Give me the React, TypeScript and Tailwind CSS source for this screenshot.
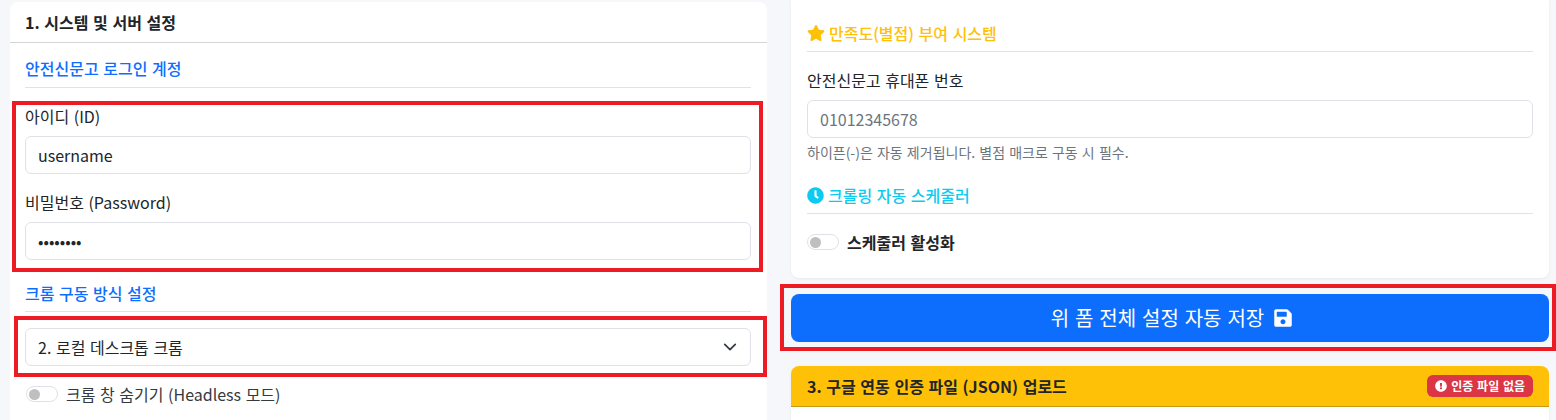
import React from 'react';
import { FaStar, FaClock, FaSave, FaExclamationCircle } from 'react-icons/fa';

const inputClass =
  'block w-full h-[38px] px-3 rounded-md border border-[#dee2e6] bg-white text-base text-[#212529] outline-none placeholder:text-[#6c757d]';

const SubHeading: React.FC<{ className: string; icon?: React.ReactNode; children: React.ReactNode }> = ({
  className,
  icon,
  children,
}) => (
  <div className={`flex items-center gap-[4px] h-[24px] font-medium text-base ${className}`}>
    {icon}
    <span>{children}</span>
  </div>
);

const Toggle: React.FC = () => (
  <span className="flex items-center w-8 h-4 rounded-full border border-[#dee2e6] bg-white pl-[2px]">
    <span className="w-[11px] h-[11px] rounded-full bg-[#bfbfbf]"></span>
  </span>
);

export default function App() {
  return (
    <div
      className="relative h-[420px] overflow-hidden bg-[#f6f7fb] text-[#212529] [word-spacing:1px]"
      style={{ fontFamily: '"Noto Sans CJK KR", "Noto Sans", sans-serif' }}
    >
      <div className="grid grid-cols-[757px_758px] gap-x-[24px] pl-[10px]">
        {/* left column */}
        <div className="mt-[2px] h-[440px] rounded-t-lg bg-white">
          <div className="flex items-center h-[41px] px-[15px] border-b border-[#d3d5d8] font-bold text-base">
            1. 시스템 및 서버 설정
          </div>
          <div className="pl-[15px] pr-[16px]">
            <div className="pt-[13px] pb-[7px] border-b border-[#e0e2e5]">
              <SubHeading className="text-[#0d6efd]">안전신문고 로그인 계정</SubHeading>
            </div>
            <label className="block mt-[16px] mb-[8px] h-[24px] leading-[24px] text-base">아이디 (ID)</label>
            <input className={inputClass} defaultValue="username" readOnly />
            <label className="block mt-[16px] mb-[8px] h-[24px] leading-[24px] text-base">비밀번호 (Password)</label>
            <input className={inputClass} type="password" defaultValue="password" readOnly />
            <div className="mt-[21px] pb-[6px] border-b border-[#e0e2e5]">
              <SubHeading className="text-[#0d6efd]">크롬 구동 방식 설정</SubHeading>
            </div>
            <div className="relative mt-[16px]">
              <select className={`${inputClass} appearance-none [word-spacing:1px]`} defaultValue="local">
                <option value="local">2. 로컬 데스크톱 크롬</option>
              </select>
              <svg
                className="absolute right-[14px] top-[12px] w-[14px] h-[14px]"
                viewBox="0 0 16 16"
                fill="none"
                stroke="#343a40"
                strokeWidth="2"
                strokeLinecap="round"
                strokeLinejoin="round"
              >
                <path d="m2 5 6 6 6-6" />
              </svg>
            </div>
            <div className="flex items-center gap-[8px] mt-[16px] ml-[1px] h-[24px] text-base text-[#343a40]">
              <Toggle />
              <span>크롬 창 숨기기 (Headless 모드)</span>
            </div>
          </div>
        </div>

        {/* right column */}
        <div>
          <div className="h-[278px] rounded-b-lg bg-white shadow-[0_1px_3px_rgba(0,0,0,0.06)] px-[16px] pt-[21px]">
            <div className="pb-[6px] border-b border-[#e0e2e5]">
              <SubHeading className="text-[#ffc107]" icon={<FaStar className="w-[18px] h-[16px]" />}>
                만족도(별점) 부여 시스템
              </SubHeading>
            </div>
            <label className="block mt-[16px] mb-[8px] h-[24px] leading-[24px] text-base">안전신문고 휴대폰 번호</label>
            <input className={inputClass} placeholder="01012345678" readOnly />
            <div className="mt-[4px] h-[20px] leading-[20px] text-sm text-[#6c757d]">
              하이픈(-)은 자동 제거됩니다. 별점 매크로 구동 시 필수.
            </div>
            <div className="mt-[21px] pb-[6px] border-b border-[#e0e2e5]">
              <SubHeading className="text-[#0dcaf0]" icon={<FaClock className="w-[17px] h-[17px]" />}>
                크롤링 자동 스케줄러
              </SubHeading>
            </div>
            <div className="flex items-center gap-[8px] mt-[16px] h-[24px] font-bold text-base">
              <Toggle />
              <span>스케줄러 활성화</span>
            </div>
          </div>

          <button className="flex items-center justify-center gap-[10px] w-full h-[48px] mt-[16px] pl-[3px] rounded-lg bg-[#0d6efd] text-white text-[20px] [word-spacing:1.4px]">
            위 폼 전체 설정 자동 저장
            <FaSave className="w-[18px] h-[20px]" />
          </button>

          <div className="mt-[24px] h-[60px] rounded-t-lg bg-white shadow-[0_1px_3px_rgba(0,0,0,0.06)]">
            <div className="flex items-center justify-between h-[41px] pl-[16px] pr-[16px] rounded-t-lg bg-[#ffc107] border-b border-[#c49a1a]">
              <span className="font-bold text-base">3. 구글 연동 인증 파일 (JSON) 업로드</span>
              <span className="flex items-center gap-[4px] h-[22px] px-[8px] rounded-md bg-[#dc3545] text-white font-bold text-xs">
                <FaExclamationCircle className="w-[12px] h-[12px]" />
                인증 파일 없음
              </span>
            </div>
          </div>
        </div>
      </div>

      {/* red annotation boxes drawn over the screenshot */}
      <div className="absolute left-[12px] top-[101px] w-[751px] h-[171px] border-[4px] border-[#ed1c24]"></div>
      <div className="absolute left-[14px] top-[316px] w-[753px] h-[61px] border-[4px] border-[#ed1c24]"></div>
      <div className="absolute left-[780px] top-[284px] w-[776px] h-[67px] border-[4px] border-[#ed1c24]"></div>
    </div>
  );
}
